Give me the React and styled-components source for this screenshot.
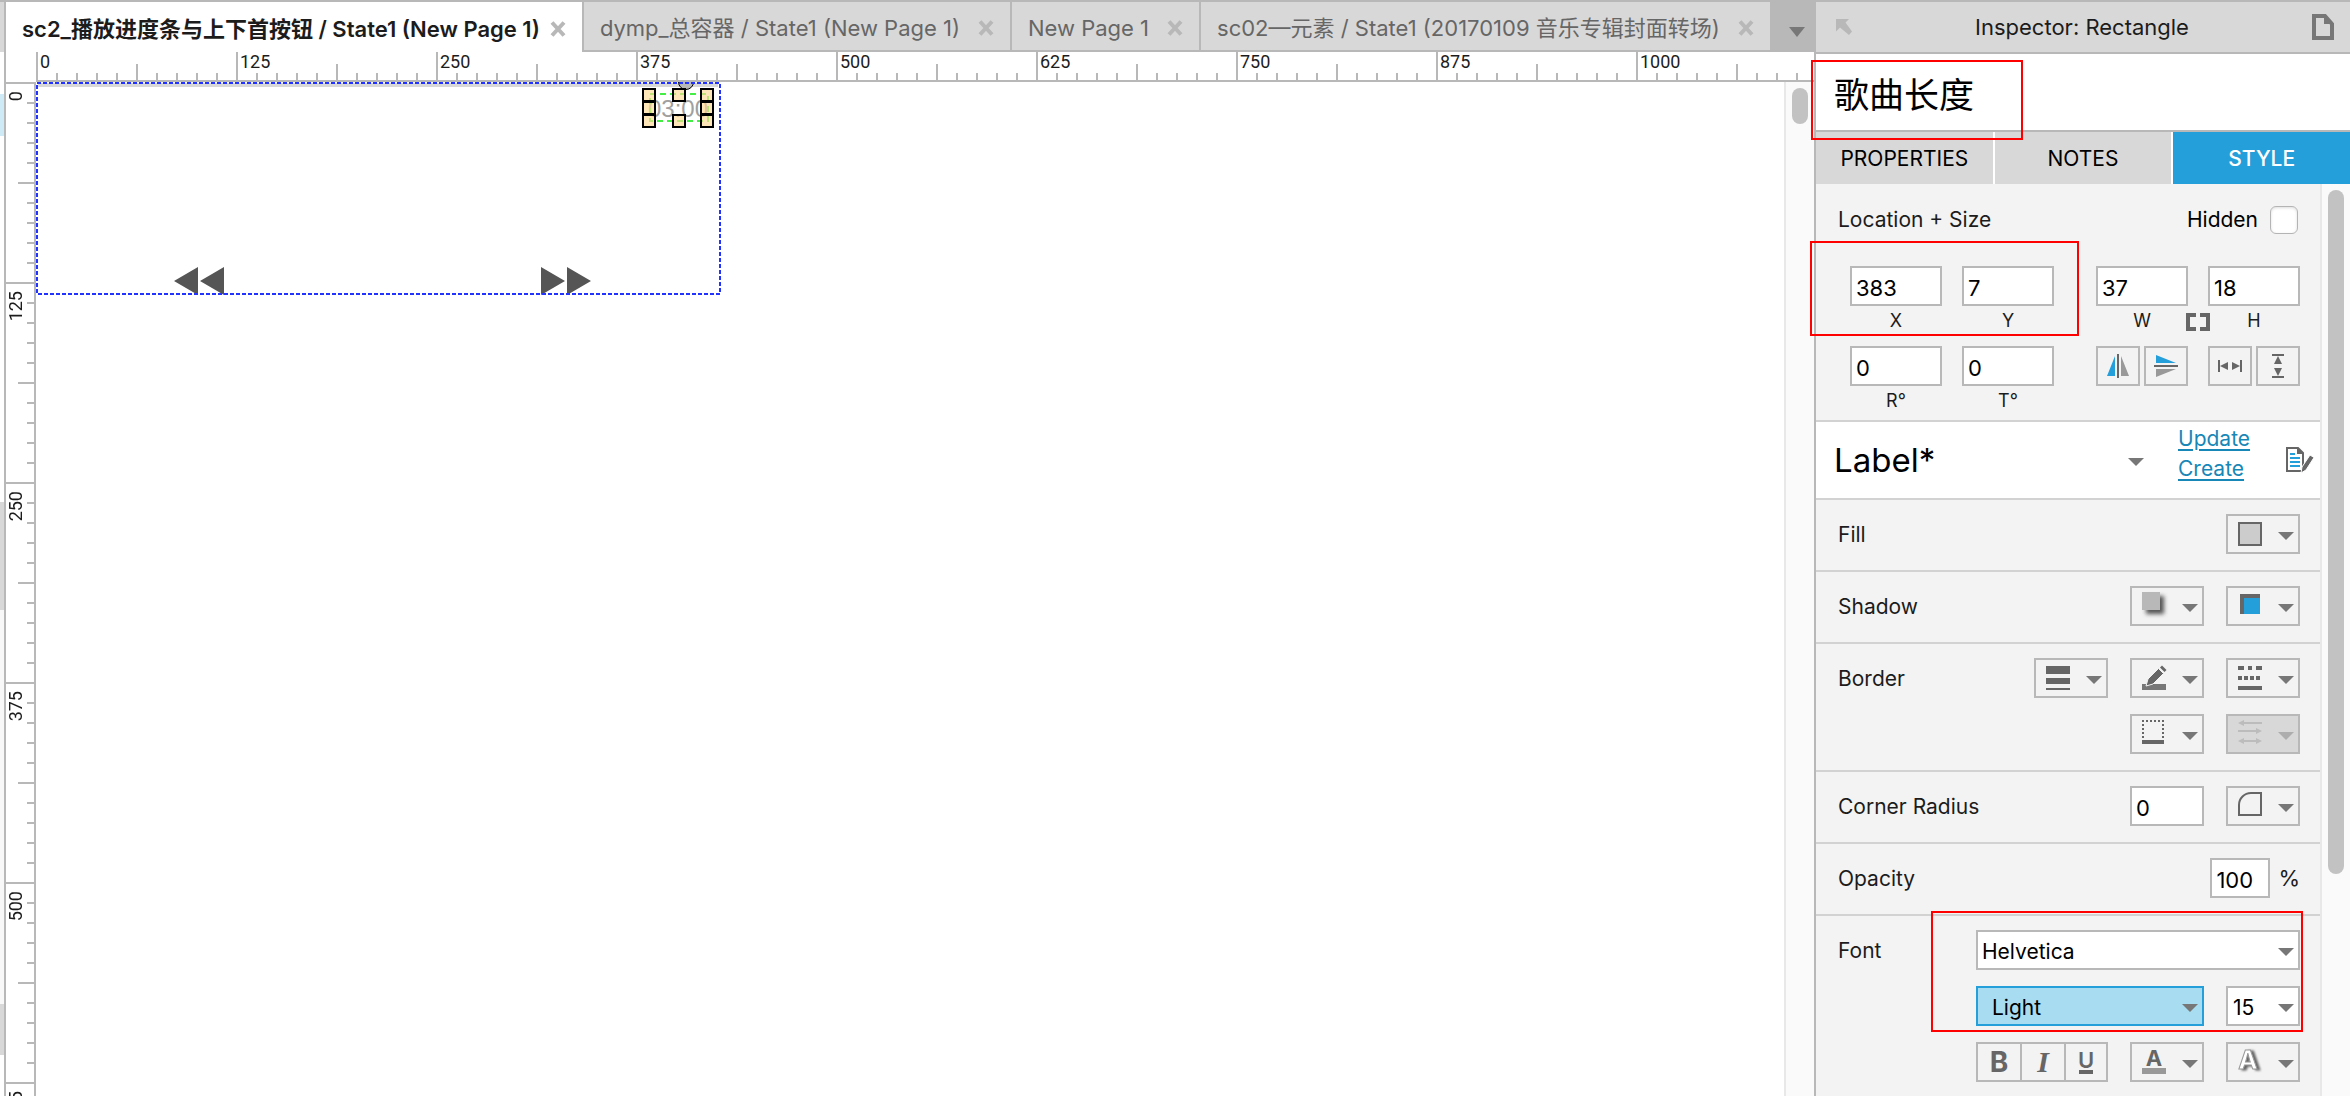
import React, { useState } from "react";
import styled, { createGlobalStyle, css } from "styled-components";

const c = {
  line: "#b8b8b8",
  rule: "#d2d2d2",
  bar: "#d8d8d8",
  panel: "#f3f3f3",
  blue: "#259fda",
  paleBlue: "#a8dcf0",
  icon: "#666666",
  caret: "#777777",
  red: "#ff0000",
};

const Global = createGlobalStyle`
  *, *::before, *::after { box-sizing: border-box; }
  body { margin: 0; background: #fff; overflow: hidden; }
  button, input, select { font: inherit; color: inherit; margin: 0; }
  button { padding: 0; border: 0; background: none; cursor: pointer; }
  svg { display: block; flex: none; overflow: visible; }
`;

const Shell = styled.div`
  display: flex;
  height: 100vh;
  overflow: hidden;
  border-top: 2px solid ${c.line};
  background: #fff;
  color: #1c1c1c;
  font: 400 21px/30px Inter, "Noto Sans CJK SC", sans-serif;
`;

/* ---------- edge of the collapsed side panel ---------- */

const Edge = styled.aside`
  flex: none;
  width: 6px;
  display: flex;
  flex-direction: column;
  border-right: 2px solid ${c.line};
`;

const EdgeBlock = styled.div`
  flex: none;
  height: ${(p) => p.$h}px;
  background: ${(p) => p.$bg || "#fff"};
`;

/* ---------- editor ---------- */

const Editor = styled.main`
  flex: 1;
  min-width: 0;
  display: flex;
  flex-direction: column;
`;

const TabBar = styled.nav`
  flex: none;
  display: flex;
  height: 50px;
`;

const Tab = styled.div`
  flex: none;
  display: flex;
  align-items: center;
  gap: ${(p) => (p.$active ? 10 : 18)}px;
  padding: 4px 16px 0;
  border-right: 2px solid ${c.line};
  font-size: 22px;
  ${(p) =>
    p.$active
      ? css`
          font-weight: 600;
          background: #fff;
        `
      : css`
          color: #666;
          background: ${c.bar};
          border-bottom: 2px solid ${c.line};
        `}
`;

const TabName = styled.button`
  white-space: nowrap;
`;

const MoreTabs = styled.button`
  flex: 1;
  min-width: 36px;
  display: flex;
  align-items: center;
  padding: 6px 0 0 17px;
  background: ${c.line};
`;

const RulerRow = styled.div`
  flex: none;
  display: flex;
  height: 30px;
`;

const RulerCorner = styled.div`
  flex: none;
  width: 30px;
`;

const RulerX = styled.div`
  flex: 1;
  display: flex;
  overflow: hidden;
  border-bottom: 2px solid ${c.line};
`;

const SegmentX = styled.div`
  flex: none;
  width: 200px;
  padding-left: 4px;
  font: 18px/20px Roboto, sans-serif;
  background:
    linear-gradient(90deg, ${c.line} 2px, transparent 2px) left bottom / 200px 28px repeat-x,
    linear-gradient(90deg, ${c.line} 2px, transparent 2px) left bottom / 100px 16px repeat-x,
    linear-gradient(90deg, ${c.line} 2px, transparent 2px) left bottom / 20px 7px repeat-x;
`;

const Workspace = styled.div`
  flex: 1;
  min-height: 0;
  display: flex;
`;

const RulerY = styled.div`
  flex: none;
  width: 30px;
  overflow: hidden;
  border-right: 2px solid ${c.line};
`;

const SegmentY = styled.div`
  height: 200px;
  display: flex;
  align-items: flex-start;
  padding-top: 9px;
  font: 18px/20px Roboto, sans-serif;
  background:
    linear-gradient(${c.line} 2px, transparent 2px) right top / 28px 200px repeat-y,
    linear-gradient(${c.line} 2px, transparent 2px) right top / 16px 100px repeat-y,
    linear-gradient(${c.line} 2px, transparent 2px) right top / 7px 20px repeat-y;
`;

const SideText = styled.span`
  writing-mode: vertical-rl;
  transform: rotate(180deg);
`;

const Canvas = styled.div`
  flex: 1;
  position: relative;
  overflow: hidden;
`;

const DynamicPanel = styled.div`
  position: absolute;
  left: 0;
  top: 0;
  width: 685px;
  height: 213px;
  overflow: hidden;
`;

const Outline = styled.svg`
  position: absolute;
  inset: 0;
`;

const TrackLine = styled.div`
  position: absolute;
  left: 2px;
  top: 1px;
  width: 680px;
  height: 4px;
  background: ${c.bar};
`;

const Knob = styled.div`
  position: absolute;
  left: 642px;
  top: -8px;
  width: 16px;
  height: 16px;
  border: 1px solid #000;
  border-radius: 50%;
  background: ${c.line};
`;

const Duration = styled.div`
  position: absolute;
  left: 612px;
  top: 12px;
  width: 60px;
  color: #a0a0a0;
  font: 24px/30px "Liberation Sans", sans-serif;
`;

const Skip = styled.button`
  position: absolute;
  left: ${(p) => p.$x}px;
  top: 185px;
`;

const ScrollTrack = styled.div`
  flex: none;
  width: 30px;
  padding: 6px;
  border-left: 2px solid #e8e8e8;
  background: #fafafa;
`;

const Thumb = styled.div`
  width: 16px;
  height: ${(p) => p.$h};
  border-radius: 8px;
  background: #c2c2c2;
`;

/* ---------- inspector ---------- */

const Panel = styled.aside`
  flex: none;
  width: 536px;
  display: flex;
  flex-direction: column;
  border-left: 2px solid ${c.line};
`;

const PanelHeader = styled.header`
  flex: none;
  height: 52px;
  display: flex;
  align-items: center;
  justify-content: space-between;
  padding: 0 16px 0 20px;
  border-bottom: 2px solid ${c.line};
  background: ${c.bar};
`;

const PanelTitle = styled.h1`
  margin: 0;
  font: inherit;
  font-size: 22px;
`;

const NameRow = styled.div`
  position: relative;
  flex: none;
  height: 78px;
  display: flex;
  align-items: center;
  padding: 0 18px;
  border-bottom: 2px solid ${c.line};
`;

const NameInput = styled.input`
  width: 100%;
  height: 52px;
  padding: 0;
  border: 0;
  outline: 0;
  color: #000;
  font-size: 35px;
`;

const Mark = styled.div`
  position: absolute;
  z-index: 2;
  left: ${(p) => p.$x}px;
  top: ${(p) => p.$y}px;
  width: ${(p) => p.$w}px;
  height: ${(p) => p.$h}px;
  border: 2px solid ${c.red};
  pointer-events: none;
`;

const PanelTabs = styled.div`
  flex: none;
  display: flex;
  gap: 2px;
  height: 52px;
  background: #fff;
`;

const PanelTab = styled.button`
  flex: 1;
  padding-top: 2px;
  color: ${(p) => (p.$active ? "#fff" : "#000")};
  background: ${(p) => (p.$active ? c.blue : c.bar)};
  font-weight: ${(p) => (p.$active ? 500 : 400)};
`;

const PanelBody = styled.div`
  flex: 1;
  min-height: 0;
  display: flex;
  background: ${c.panel};
`;

const Sections = styled.div`
  flex: 1;
`;

const Section = styled.section`
  position: relative;
  display: flex;
  justify-content: space-between;
  padding: 14px 20px 16px 22px;
  border-bottom: 2px solid ${c.rule};
`;

const SectionLabel = styled.span`
  height: 40px;
  line-height: 42px;
`;

const LocationSection = styled(Section)`
  flex-direction: column;
  padding-top: 20px;
  padding-bottom: 4px;
`;

const LocationHead = styled.div`
  display: flex;
  justify-content: space-between;
  align-items: center;
  height: 32px;
  margin-bottom: 30px;
  padding-right: 2px;
  line-height: 32px;
`;

const HiddenLabel = styled.label`
  display: flex;
  align-items: center;
  gap: 12px;
  color: #000;
  line-height: 34px;
`;

const Check = styled.input`
  appearance: none;
  width: 28px;
  height: 28px;
  border: 1px solid #b4b4b4;
  border-radius: 6px;
  background: #fff;
  box-shadow: inset 0 1px 3px #ddd;
`;

const FieldRow = styled.div`
  display: flex;
  justify-content: space-between;
  padding-left: 12px;
  min-height: 70px;
  margin-bottom: ${(p) => (p.$last ? 0 : 10)}px;
`;

const FieldPair = styled.div`
  display: grid;
  grid-template-columns: 92px 20px 92px;
`;

const FieldLabel = styled.label`
  display: flex;
  flex-direction: column;
  align-items: center;
  font-size: 18px;
`;

const Box = styled.input`
  width: ${(p) => p.$w || 92}px;
  height: 40px;
  padding: 4px 0 0 4px;
  border: 2px solid ${c.line};
  border-radius: 0;
  outline: 0;
  background: #fff;
  color: #000;
  font-size: 22px;
`;

const LinkToggle = styled.button`
  grid-column: 2;
  align-self: end;
  justify-self: center;
  margin-bottom: 5px;
`;

const ButtonSet = styled.div`
  display: flex;
  gap: ${(p) => p.$gap}px;
`;

const ToolButton = styled.button`
  width: 44px;
  height: 40px;
  display: flex;
  align-items: center;
  justify-content: center;
  border: 2px solid ${c.line};
  border-right-width: ${(p) => (p.$joined ? 0 : 2)}px;
`;

const PickerButton = styled.button`
  width: 74px;
  height: 40px;
  display: flex;
  align-items: center;
  justify-content: space-between;
  padding: 0 4px 0 10px;
  border: 2px solid ${c.line};
  background: ${(p) => (p.disabled ? c.bar : "transparent")};
`;

const Pickers = styled.div`
  display: grid;
  grid-template-columns: repeat(${(p) => p.$n}, 74px);
  justify-items: end;
  gap: 16px 22px;
`;

const StyleSection = styled(Section)`
  align-items: center;
  height: 78px;
  padding: 0 8px 0 18px;
  background: #fff;
`;

const StyleLinks = styled.div`
  flex: 1;
  display: flex;
  flex-direction: column;
  align-items: flex-start;
  padding: 0 0 12px 30px;
`;

const TextLink = styled.a`
  color: #1787b8;
  text-decoration: underline;
  text-decoration-thickness: 2px;
  text-underline-offset: 3px;
`;

const Combo = styled.span`
  position: relative;
  display: flex;
  align-items: center;
  width: ${(p) => p.$w}px;
`;

const ComboSelect = styled.select`
  appearance: none;
  width: 100%;
  height: 40px;
  padding: 4px 24px 0 ${(p) => p.$pad || 4}px;
  border: 2px solid ${(p) => (p.$on ? c.blue : c.line)};
  border-radius: 0;
  background: ${(p) => (p.$on ? c.paleBlue : "#fff")};
  color: #000;
`;

const StyleSelect = styled(ComboSelect)`
  height: 52px;
  padding: 0;
  border: 0;
  font-size: 33px;
`;

const ComboCaret = styled.span`
  position: absolute;
  right: ${(p) => p.$right || 6}px;
  pointer-events: none;
`;

const OpacityRow = styled.label`
  display: flex;
  align-items: center;
  gap: 8px;
  font-size: 22px;
`;

const FontGrid = styled.div`
  display: flex;
  flex-direction: column;
  gap: 16px;
  width: 324px;
`;

const FontRow = styled.div`
  display: flex;
  justify-content: space-between;
`;

/* ---------- drawings ---------- */

const Caret = ({ color = c.caret, h = 8 }) => (
  <svg width="16" height={h + 4} viewBox={`0 0 16 ${h + 4}`} aria-hidden="true">
    <path d={`M0 4H16L8 ${h + 4}Z`} fill={color} />
  </svg>
);

const Cross = () => (
  <svg width="16" height="16" viewBox="0 0 16 16" aria-hidden="true">
    <path d="M2 1.500L14 14.500M14 1.500L2 14.500" stroke={c.line} strokeWidth="4" />
  </svg>
);

const Icon = ({ w = 24, h = 24, children }) => (
  <svg width={w} height={h} viewBox={`0 0 ${w} ${h}`} fill={c.icon} aria-hidden="true">
    {children}
  </svg>
);

const icons = {
  fill: <rect x="1" y="1" width="22" height="22" fill="#ccc" stroke={c.icon} strokeWidth="2" />,
  outer: (
    <>
      <rect x="4" y="2" width="18" height="18" fill="#555" style={{ filter: "blur(2px)" }} />
      <rect x="0" y="-2" width="18" height="18" fill="#b8b8b8" />
    </>
  ),
  inner: (
    <>
      <rect x="2" y="0" width="20" height="20" />
      <rect x="6" y="4" width="16" height="16" fill={c.blue} />
    </>
  ),
  width: <path d="M0 0H24V8H0ZM0 12H24V18H0ZM0 22H24V24H0Z" />,
  pencil: (
    <>
      <path d="M0 18H24V24H0Z" fill="#777" />
      <path d="M4 20L6 13L16.500 2.500L21.500 7.500L11 18Z" stroke={c.panel} strokeWidth="1" />
      <path d="M18 1.500L20 -.5L24.500 4L22.500 6Z" />
    </>
  ),
  dashes: (
    <path d="M0 0H6V4H0ZM10 0H14V4H10ZM18 0H24V4H18ZM0 10H4V14H0ZM6 10H10V14H6ZM12 10H16V14H12ZM18 10H22V14H18ZM0 20H24V24H0Z" />
  ),
  sides: (
    <>
      <path d="M0 -1H22M1 2V18M21 2V18" fill="none" stroke={c.icon} strokeWidth="2" strokeDasharray="2 2" />
      <path d="M0 18H22V22H0Z" />
    </>
  ),
  arrows: (
    <g fill="#bcbcbc" stroke="none">
      <path d="M4 0H24V2H4ZM0 8H20V10H0ZM4 18H20V20H4Z" />
      <path d="M0 1L6 -2V4ZM24 9L18 6V12ZM0 19L6 16V22ZM24 19L18 16V22Z" />
    </g>
  ),
  corner: <path d="M1 21V11A12 12 0 0 1 13 -1H23V21Z" fill="none" stroke={c.icon} strokeWidth="2" />,
  color: (
    <>
      <text x="12" y="16" textAnchor="middle" fontFamily="Inter, sans-serif" fontWeight="700" fontSize="22">A</text>
      <path d="M0 18H24V24H0Z" fill="#999" />
    </>
  ),
  glow: (
    <text
      x="10"
      y="19"
      textAnchor="middle"
      fontFamily="Inter, sans-serif"
      fontWeight="700"
      fontSize="26"
      fill="#fff"
      stroke="#999"
      strokeWidth="1"
      style={{ filter: "drop-shadow(3px 1px 1px #666)" }}
    >
      A
    </text>
  ),
  flipH: (
    <>
      <path d="M9 2V22H1Z" fill={c.blue} />
      <path d="M11 0H13V24H11Z" />
      <path d="M15 2V22H23Z" fill="#999" />
    </>
  ),
  flipV: (
    <>
      <path d="M2 1V9H22Z" fill={c.blue} />
      <path d="M0 11H24V13H0Z" />
      <path d="M2 15V23L22 15Z" fill="#999" />
    </>
  ),
  fitW: <path d="M0 6H2V18H0ZM22 6H24V18H22ZM2 12L10 8V16ZM22 12L14 8V16Z" />,
  fitH: <path d="M6 0H18V2H6ZM6 22H18V24H6ZM12 2L16 10H8ZM12 22L16 14H8Z" />,
};

const Picker = ({ name, label, disabled }) => (
  <PickerButton aria-label={label} disabled={disabled}>
    <Icon>{icons[name]}</Icon>
    <Caret color={disabled ? "#adadad" : c.caret} />
  </PickerButton>
);

const Field = ({ label, value }) => (
  <FieldLabel>
    <Box defaultValue={value} />
    {label}
  </FieldLabel>
);

const tabs = [
  "sc2_播放进度条与上下首按钮 / State1 (New Page 1)",
  "dymp_总容器 / State1 (New Page 1)",
  "New Page 1",
  "sc02—元素 / State1 (20170109 音乐专辑封面转场)",
];

const marksX = [0, 125, 250, 375, 500, 625, 750, 875, 1000];
const marksY = [0, 125, 250, 375, 500, 625];

const edge = [
  [50, c.bar],
  [42, "#fff"],
  [42, "#cdeaf6"],
  [366, "#fff"],
  [108, c.bar],
  [394, "#f8f8f8"],
  [51, c.bar],
];

const handles = [
  [607, 7], [637, 7], [665, 7],
  [607, 20], [665, 20],
  [607, 33], [637, 33], [665, 33],
];

export default function App() {
  const [active, setActive] = useState("STYLE");
  return (
    <Shell>
      <Global />
      <Edge>
        {edge.map(([h, bg], i) => (
          <EdgeBlock key={i} $h={h} $bg={bg} />
        ))}
      </Edge>

      <Editor>
        <TabBar>
          {tabs.map((t, i) => (
            <Tab key={t} $active={i === 0}>
              <TabName>{t}</TabName>
              <button aria-label="Close tab"><Cross /></button>
            </Tab>
          ))}
          <MoreTabs aria-label="More tabs"><Caret h={10} /></MoreTabs>
        </TabBar>

        <RulerRow>
          <RulerCorner />
          <RulerX>
            {marksX.map((m) => <SegmentX key={m}>{m}</SegmentX>)}
          </RulerX>
        </RulerRow>

        <Workspace>
          <RulerY>
            {marksY.map((m) => (
              <SegmentY key={m}><SideText>{m}</SideText></SegmentY>
            ))}
          </RulerY>
          <Canvas>
            <DynamicPanel>
              <TrackLine />
              <Knob />
              <Duration>03:00</Duration>
              <Skip $x={138} aria-label="Previous">
                <Icon w={50} h={28}>
                  <path d="M0 14L24 0V28ZM26 14L50 0V28Z" fill="#555" />
                </Icon>
              </Skip>
              <Skip $x={505} aria-label="Next">
                <Icon w={50} h={28}>
                  <path d="M0 0V28L24 14ZM26 0V28L50 14Z" fill="#555" />
                </Icon>
              </Skip>
              <Outline width="685" height="213" fill="none" aria-hidden="true">
                <rect x="1" y="1" width="683" height="211" stroke="#2233ff" strokeWidth="2" strokeDasharray="4 2" />
                <rect x="614" y="12" width="58" height="27" stroke="#44ee44" strokeWidth="2" strokeDasharray="6 4" />
                {handles.map(([x, y]) => (
                  <rect key={`${x}-${y}`} x={x} y={y} width="12" height="12" fill="#ffd994" fillOpacity=".65" stroke="#000" strokeWidth="2" />
                ))}
              </Outline>
            </DynamicPanel>
          </Canvas>
          <ScrollTrack><Thumb $h="36px" /></ScrollTrack>
        </Workspace>
      </Editor>

      <Panel>
        <PanelHeader>
          <button aria-label="Detach panel">
            <Icon w={16} h={16}>
              <path d="M0 0H13L9.500 3.500L16 12.500L13 16L4 8.500L0 12.500Z" fill={c.line} />
            </Icon>
          </button>
          <PanelTitle>Inspector: Rectangle</PanelTitle>
          <button aria-label="Page">
            <Icon w={22} h={26}>
              <path d="M2 2H13L20 10V24H2Z" fill="none" stroke={c.caret} strokeWidth="4" />
              <path d="M12 2L20 10H12Z" fill={c.caret} />
            </Icon>
          </button>
        </PanelHeader>

        <NameRow>
          <NameInput aria-label="Widget name" defaultValue="歌曲长度" />
          <Mark $x={-5} $y={6} $w={212} $h={80} />
        </NameRow>

        <PanelTabs>
          {["PROPERTIES", "NOTES", "STYLE"].map((t) => (
            <PanelTab key={t} $active={t === active} onClick={() => setActive(t)}>{t}</PanelTab>
          ))}
        </PanelTabs>

        <PanelBody>
          <Sections>
            <LocationSection>
              <LocationHead>
                <span>Location + Size</span>
                <HiddenLabel>Hidden<Check type="checkbox" /></HiddenLabel>
              </LocationHead>
              <FieldRow>
                <FieldPair>
                  <Field label="X" value="383" />
                  <span />
                  <Field label="Y" value="7" />
                </FieldPair>
                <FieldPair>
                  <Field label="W" value="37" />
                  <LinkToggle aria-label="Keep proportions">
                    <Icon w={24} h={18}>
                      <path d="M0 0H10V4H4V14H10V18H0ZM24 0H14V4H20V14H14V18H24Z" />
                    </Icon>
                  </LinkToggle>
                  <Field label="H" value="18" />
                </FieldPair>
              </FieldRow>
              <FieldRow $last>
                <FieldPair>
                  <Field label="R°" value="0" />
                  <span />
                  <Field label="T°" value="0" />
                </FieldPair>
                <ButtonSet $gap={20}>
                  <ButtonSet $gap={4}>
                    <ToolButton aria-label="Flip horizontal"><Icon>{icons.flipH}</Icon></ToolButton>
                    <ToolButton aria-label="Flip vertical"><Icon>{icons.flipV}</Icon></ToolButton>
                  </ButtonSet>
                  <ButtonSet $gap={4}>
                    <ToolButton aria-label="Fit width"><Icon>{icons.fitW}</Icon></ToolButton>
                    <ToolButton aria-label="Fit height"><Icon>{icons.fitH}</Icon></ToolButton>
                  </ButtonSet>
                </ButtonSet>
              </FieldRow>
              <Mark $x={-6} $y={57} $w={269} $h={95} />
            </LocationSection>

            <StyleSection>
              <Combo $w={314}>
                <StyleSelect aria-label="Widget style" defaultValue="Label*">
                  <option>Label*</option>
                </StyleSelect>
                <ComboCaret $right={4}><Caret /></ComboCaret>
              </Combo>
              <StyleLinks>
                <TextLink href="#update">Update</TextLink>
                <TextLink href="#create">Create</TextLink>
              </StyleLinks>
              <button aria-label="Manage styles">
                <Icon w={26} h={26}>
                  <path d="M1 1H12L17 6V24H1Z" fill="#fff" stroke={c.icon} strokeWidth="2" />
                  <path d="M11 0L18 7H11Z" />
                  <path d="M4 6H9V8H4ZM4 10H14V12H4ZM4 14H14V16H4ZM4 18H14V20H4Z" fill={c.blue} />
                  <path d="M15 26L16 20L24 8L28 10.500L20 23Z" stroke="#fff" strokeWidth="1" />
                </Icon>
              </button>
            </StyleSection>

            <Section>
              <SectionLabel>Fill</SectionLabel>
              <Pickers $n={1}><Picker name="fill" label="Fill colour" /></Pickers>
            </Section>

            <Section>
              <SectionLabel>Shadow</SectionLabel>
              <Pickers $n={2}>
                <Picker name="outer" label="Outer shadow" />
                <Picker name="inner" label="Inner shadow" />
              </Pickers>
            </Section>

            <Section>
              <SectionLabel>Border</SectionLabel>
              <Pickers $n={3}>
                <Picker name="width" label="Line width" />
                <Picker name="pencil" label="Line colour" />
                <Picker name="dashes" label="Line style" />
                <span />
                <Picker name="sides" label="Border visibility" />
                <Picker name="arrows" label="Arrow style" disabled />
              </Pickers>
            </Section>

            <Section>
              <SectionLabel as="label" htmlFor="radius">Corner Radius</SectionLabel>
              <Pickers $n={2}>
                <Box id="radius" $w={74} defaultValue="0" />
                <Picker name="corner" label="Corner shape" />
              </Pickers>
            </Section>

            <Section>
              <SectionLabel>Opacity</SectionLabel>
              <OpacityRow>
                <Box aria-label="Opacity" $w={60} defaultValue="100" />%
              </OpacityRow>
            </Section>

            <Section>
              <SectionLabel>Font</SectionLabel>
              <FontGrid>
                <Combo $w={324}>
                  <ComboSelect aria-label="Font family"><option>Helvetica</option></ComboSelect>
                  <ComboCaret><Caret /></ComboCaret>
                </Combo>
                <FontRow>
                  <Combo $w={228}>
                    <ComboSelect aria-label="Font weight" $on $pad={14}><option>Light</option></ComboSelect>
                    <ComboCaret><Caret /></ComboCaret>
                  </Combo>
                  <Combo $w={74}>
                    <ComboSelect aria-label="Font size" $pad={5}><option>15</option></ComboSelect>
                    <ComboCaret><Caret /></ComboCaret>
                  </Combo>
                </FontRow>
                <FontRow>
                  <ButtonSet $gap={0}>
                    <ToolButton $joined aria-label="Bold">
                      <Icon><text x="12" y="22" textAnchor="middle" fontFamily="Inter, sans-serif" fontWeight="700" fontSize="28">B</text></Icon>
                    </ToolButton>
                    <ToolButton $joined aria-label="Italic">
                      <Icon><text x="12" y="22" textAnchor="middle" fontFamily="Liberation Serif, serif" fontStyle="italic" fontWeight="700" fontSize="30">I</text></Icon>
                    </ToolButton>
                    <ToolButton aria-label="Underline">
                      <Icon>
                        <text x="12" y="18" textAnchor="middle" fontFamily="Inter, sans-serif" fontWeight="600" fontSize="22">U</text>
                        <path d="M5 20H19V24H5Z" />
                      </Icon>
                    </ToolButton>
                  </ButtonSet>
                  <Picker name="color" label="Text colour" />
                  <Picker name="glow" label="Text shadow" />
                </FontRow>
              </FontGrid>
              <Mark $x={115} $y={-5} $w={372} $h={121} />
            </Section>
          </Sections>
          <ScrollTrack><Thumb $h="76%" /></ScrollTrack>
        </PanelBody>
      </Panel>
    </Shell>
  );
}
